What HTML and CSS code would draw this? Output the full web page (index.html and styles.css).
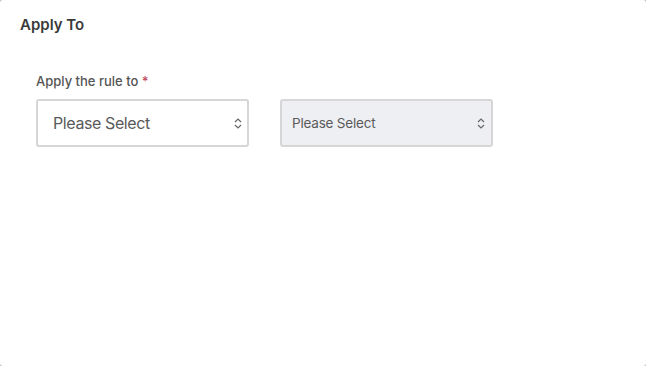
FILE: index.html
```html
<!DOCTYPE html>
<html>
<head>
<meta charset="utf-8">
<link rel="stylesheet" href="styles.css">
</head>
<body>
<div class="panel">
  <h2 class="title">Apply To</h2>
  <div class="field">
    <div class="label">Apply the rule to <span class="req">*</span></div>
    <div class="row">
      <div class="select big">
        <span>Please Select</span>
        <svg class="chev" width="8" height="13" viewBox="0 0 8 13"><path d="M1 5 L4 2 L7 5 M1 8 L4 11 L7 8" fill="none" stroke="#666" stroke-width="1.2"/></svg>
      </div>
      <div class="select small">
        <span>Please Select</span>
        <svg class="chev" width="8" height="13" viewBox="0 0 8 13"><path d="M1 5 L4 2 L7 5 M1 8 L4 11 L7 8" fill="none" stroke="#666" stroke-width="1.2"/></svg>
      </div>
    </div>
  </div>
</div>
</body>
</html>
```
FILE: styles.css
```css
html { background: #bdbdbd; height: 100%; }
body { margin: 0; height: 100%; }
.panel {
  height: 100%;
  box-sizing: border-box;
  background: #fff;
  border-radius: 3px;
  padding: 15px 20px 0 20px;
  font-family: Inter, sans-serif;
}
.title {
  margin: 0;
  font-size: 15px;
  font-weight: 600;
  color: #3a3a3a;
  line-height: 20px;
}
.field { padding: 37px 0 0 16px; }
.label {
  font-size: 13px;
  font-weight: 500;
  color: #555;
  line-height: 18px;
}
.req { color: #c0495c; }
.row { display: flex; gap: 31px; margin-top: 9px; }
.select {
  width: 213px;
  height: 48px;
  box-sizing: border-box;
  border: 2px solid #d6d6d6;
  border-radius: 3px;
  display: flex;
  align-items: center;
  justify-content: space-between;
  color: #5a5a5a;
}
.select.big { padding: 0 5px 0 15px; font-size: 16px; letter-spacing: -0.4px; background: #fff; }
.select.small { padding: 0 6px 0 10px; font-size: 13.5px; letter-spacing: -0.2px; background: #eeeff3; }
.chev { display: block; }
```
